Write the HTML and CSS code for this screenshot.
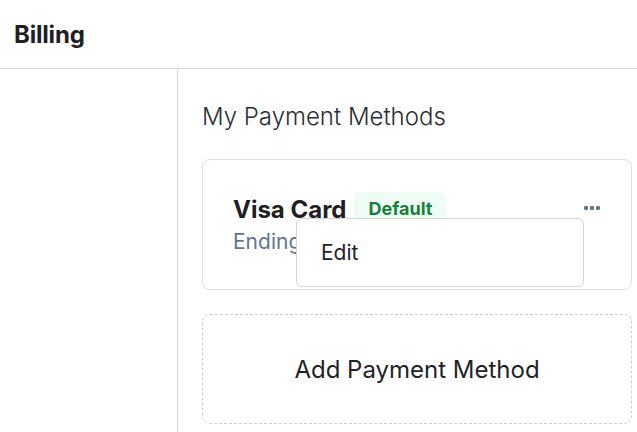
FILE: index.html
```html
<!DOCTYPE html>
<html>
<head>
<meta charset="utf-8">
<link rel="stylesheet" href="styles.css">
</head>
<body>
<header class="topbar"><h1 class="brand">Billing</h1></header>
<div class="layout">
  <aside class="sidebar"></aside>
  <main class="main">
    <h2 class="section-title">My Payment Methods</h2>
    <div class="card">
      <div class="card-body">
        <div class="card-head">
          <span class="card-name">Visa Card</span>
          <span class="badge">Default</span>
        </div>
        <div class="card-sub">Ending in 4028</div>
      </div>
      <button class="more" aria-label="More">
        <svg width="18" height="6" viewBox="0 0 18 6"><circle cx="3" cy="3" r="2.2" fill="#64748b"/><circle cx="9" cy="3" r="2.2" fill="#64748b"/><circle cx="15" cy="3" r="2.2" fill="#64748b"/></svg>
      </button>
      <div class="menu"><div class="menu-item">Edit</div></div>
    </div>
    <div class="add-box">Add Payment Method</div>
  </main>
</div>
</body>
</html>
```
FILE: styles.css
```css
* { box-sizing: border-box; }
html, body { margin: 0; padding: 0; background: #fff; }
body { font-family: Inter, "Noto Sans", sans-serif; color: #1f2328; height: 432px; overflow: hidden; }
.topbar { height: 69px; border-bottom: 1px solid #cfd8e1; display: flex; align-items: center; padding-left: 14px; }
.brand { margin: 0; font-size: 24px; font-weight: 700; color: #1e2025; letter-spacing: -0.2px; }
.layout { display: flex; height: 363px; }
.sidebar { width: 178px; flex: none; border-right: 1px solid #cfd8e1; }
.main { flex: 1; padding: 33px 5px 0 24px; }
.section-title { margin: 0; font-size: 24px; font-weight: 300; line-height: 30px; color: #2a2d33; }
.card { position: relative; margin-top: 27px; border: 1px solid #e0e0e0; border-radius: 8px; padding: 32px 30px 30px 30px; display: flex; justify-content: space-between; height: 131px; }
.card-head { display: flex; align-items: center; gap: 8px; height: 34px; }
.card-name { font-size: 24px; font-weight: 700; color: #1e2025; }
.badge { background: #effcf3; color: #17803d; font-weight: 700; font-size: 18px; padding: 0 14px; height: 34px; line-height: 34px; border-radius: 6px; }
.card-sub { margin-top: 2px; font-size: 21px; line-height: 28px; color: #64748b; }
.more { border: 0; background: none; padding: 0; width: 18px; height: 12px; margin-top: 10px; display: flex; align-items: center; }
.menu { position: absolute; left: 93px; top: 58px; width: 288px; height: 69px; background: #fff; border: 1px solid #d4d4d4; border-radius: 6px; display: flex; align-items: center; padding-left: 24px; }
.menu-item { font-size: 21px; color: #1f2328; }
.add-box { margin-top: 24px; height: 110px; border: 1px dashed #cbd2dc; border-radius: 8px; display: flex; align-items: center; justify-content: center; font-size: 24px; color: #1f2328; }
```
